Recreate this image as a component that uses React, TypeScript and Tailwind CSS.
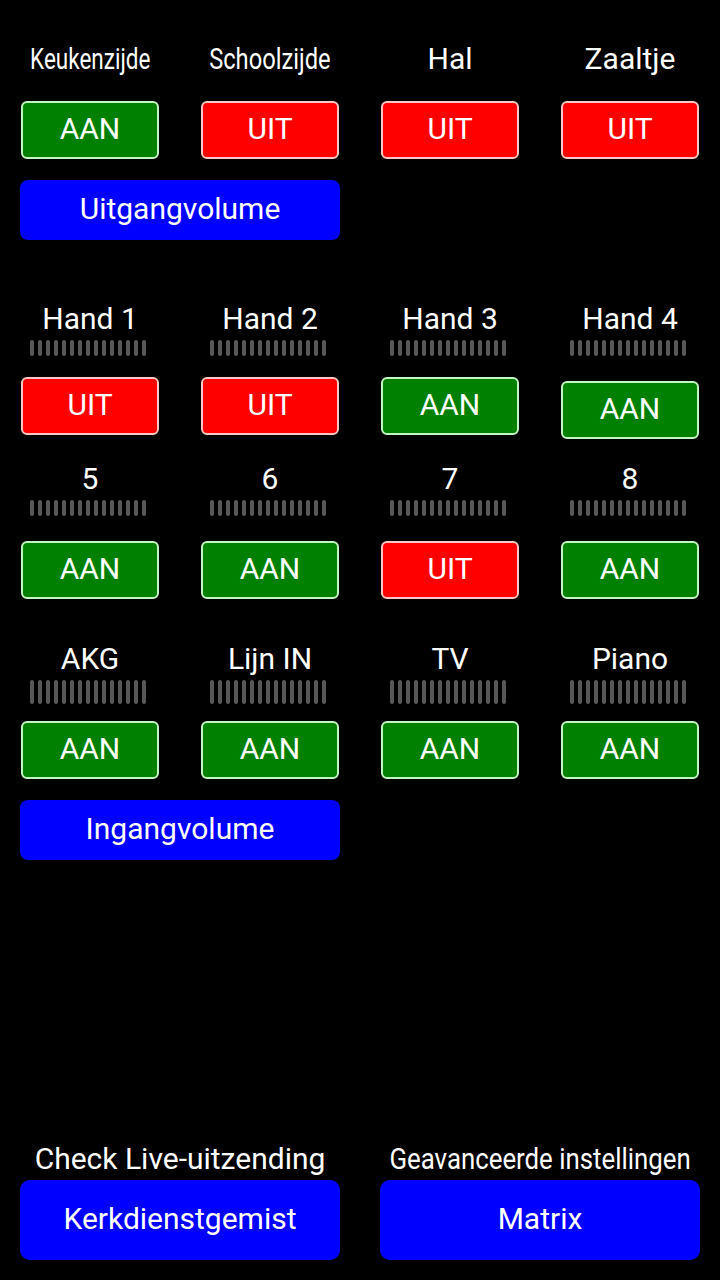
import React from "react";

const font = { fontFamily: "Roboto, 'Noto Sans', sans-serif" };

function Label({ text, squeeze }: { text: string; squeeze?: string }) {
  return (
    <div className="h-[40px] flex items-center justify-center text-white text-[30px] leading-none whitespace-nowrap">
      <span className={squeeze ?? ""}>{text}</span>
    </div>
  );
}

function Toggle({ on, extra }: { on: boolean; extra?: string }) {
  return (
    <div className={"flex justify-center " + (extra ?? "")}>
      <div
        className={
          "w-[138px] h-[58px] rounded-[6px] border-2 pb-[3px] flex items-center justify-center text-white text-[30px] leading-none " +
          (on ? "bg-[#008000] border-[#c4f5c4]" : "bg-[#ff0000] border-[#ffc4c4]")
        }
      >
        {on ? "AAN" : "UIT"}
      </div>
    </div>
  );
}

function Meter({ tall }: { tall?: boolean }) {
  return (
    <div className="flex justify-start pl-[30px]">
      <div className={"flex gap-[4px] " + (tall ? "h-[24px]" : "h-[16px]")}>
        {Array.from({ length: 15 }).map((_, i) => (
          <div key={i} className="w-[4px] h-full rounded-full bg-[#585858]" />
        ))}
      </div>
    </div>
  );
}

function BlueButton({ text, tall }: { text: string; tall?: boolean }) {
  return (
    <div
      className={
        "w-[320px] bg-[#0000ff] text-white text-[30px] leading-none pb-[2px] flex items-center justify-center " +
        (tall ? "h-[80px] rounded-[10px]" : "h-[60px] rounded-[8px]")
      }
    >
      {text}
    </div>
  );
}

export default function App() {
  const row1 = [
    { l: "Keukenzijde", on: true, sq: "inline-block scale-x-[0.75]" },
    { l: "Schoolzijde", on: false, sq: "inline-block scale-x-[0.79]" },
    { l: "Hal", on: false },
    { l: "Zaaltje", on: false },
  ];
  const hands = [
    { l: "Hand 1", on: false },
    { l: "Hand 2", on: false },
    { l: "Hand 3", on: true },
    { l: "Hand 4", on: true, extra: "mt-[4px] -mb-[4px]" },
  ];
  const nums = [
    { l: "5", on: true },
    { l: "6", on: true },
    { l: "7", on: false },
    { l: "8", on: true },
  ];
  const ins = [
    { l: "AKG", on: true },
    { l: "Lijn IN", on: true },
    { l: "TV", on: true },
    { l: "Piano", on: true },
  ];

  return (
    <div className="w-[720px] h-[1280px] bg-black flex flex-col overflow-hidden" style={font}>
      {/* Section 1 */}
      <div className="grid grid-cols-4 mt-[39px]">
        {row1.map((r) => (
          <Label key={r.l} text={r.l} squeeze={r.sq} />
        ))}
      </div>
      <div className="grid grid-cols-4 mt-[22px]">
        {row1.map((r) => (
          <Toggle key={r.l} on={r.on} />
        ))}
      </div>
      <div className="mt-[21px] px-[20px]">
        <BlueButton text="Uitgangvolume" />
      </div>

      {/* Hands */}
      <div className="grid grid-cols-4 mt-[59px]">
        {hands.map((r) => (
          <div key={r.l} className="flex flex-col">
            <Label text={r.l} />
            <div className="mt-[1px]">
              <Meter />
            </div>
            <div className="mt-[21px]">
              <Toggle on={r.on} extra={r.extra} />
            </div>
          </div>
        ))}
      </div>

      {/* 5-8 */}
      <div className="grid grid-cols-4 mt-[24px]">
        {nums.map((r) => (
          <div key={r.l} className="flex flex-col">
            <Label text={r.l} />
            <div className="mt-[1px]">
              <Meter />
            </div>
            <div className="mt-[25px]">
              <Toggle on={r.on} />
            </div>
          </div>
        ))}
      </div>

      {/* Inputs */}
      <div className="grid grid-cols-4 mt-[40px]">
        {ins.map((r) => (
          <div key={r.l} className="flex flex-col">
            <Label text={r.l} />
            <div className="mt-[1px]">
              <Meter tall />
            </div>
            <div className="mt-[17px]">
              <Toggle on={r.on} />
            </div>
          </div>
        ))}
      </div>
      <div className="mt-[21px] px-[20px]">
        <BlueButton text="Ingangvolume" />
      </div>

      {/* Bottom */}
      <div className="mt-auto mb-[20px] grid grid-cols-2">
        <div className="flex flex-col items-center">
          <Label text="Check Live-uitzending" />
          <div className="mt-[1px]">
            <BlueButton text="Kerkdienstgemist" tall />
          </div>
        </div>
        <div className="flex flex-col items-center">
          <Label text="Geavanceerde instellingen" squeeze="inline-block scale-x-[0.86]" />
          <div className="mt-[1px]">
            <BlueButton text="Matrix" tall />
          </div>
        </div>
      </div>
    </div>
  );
}
